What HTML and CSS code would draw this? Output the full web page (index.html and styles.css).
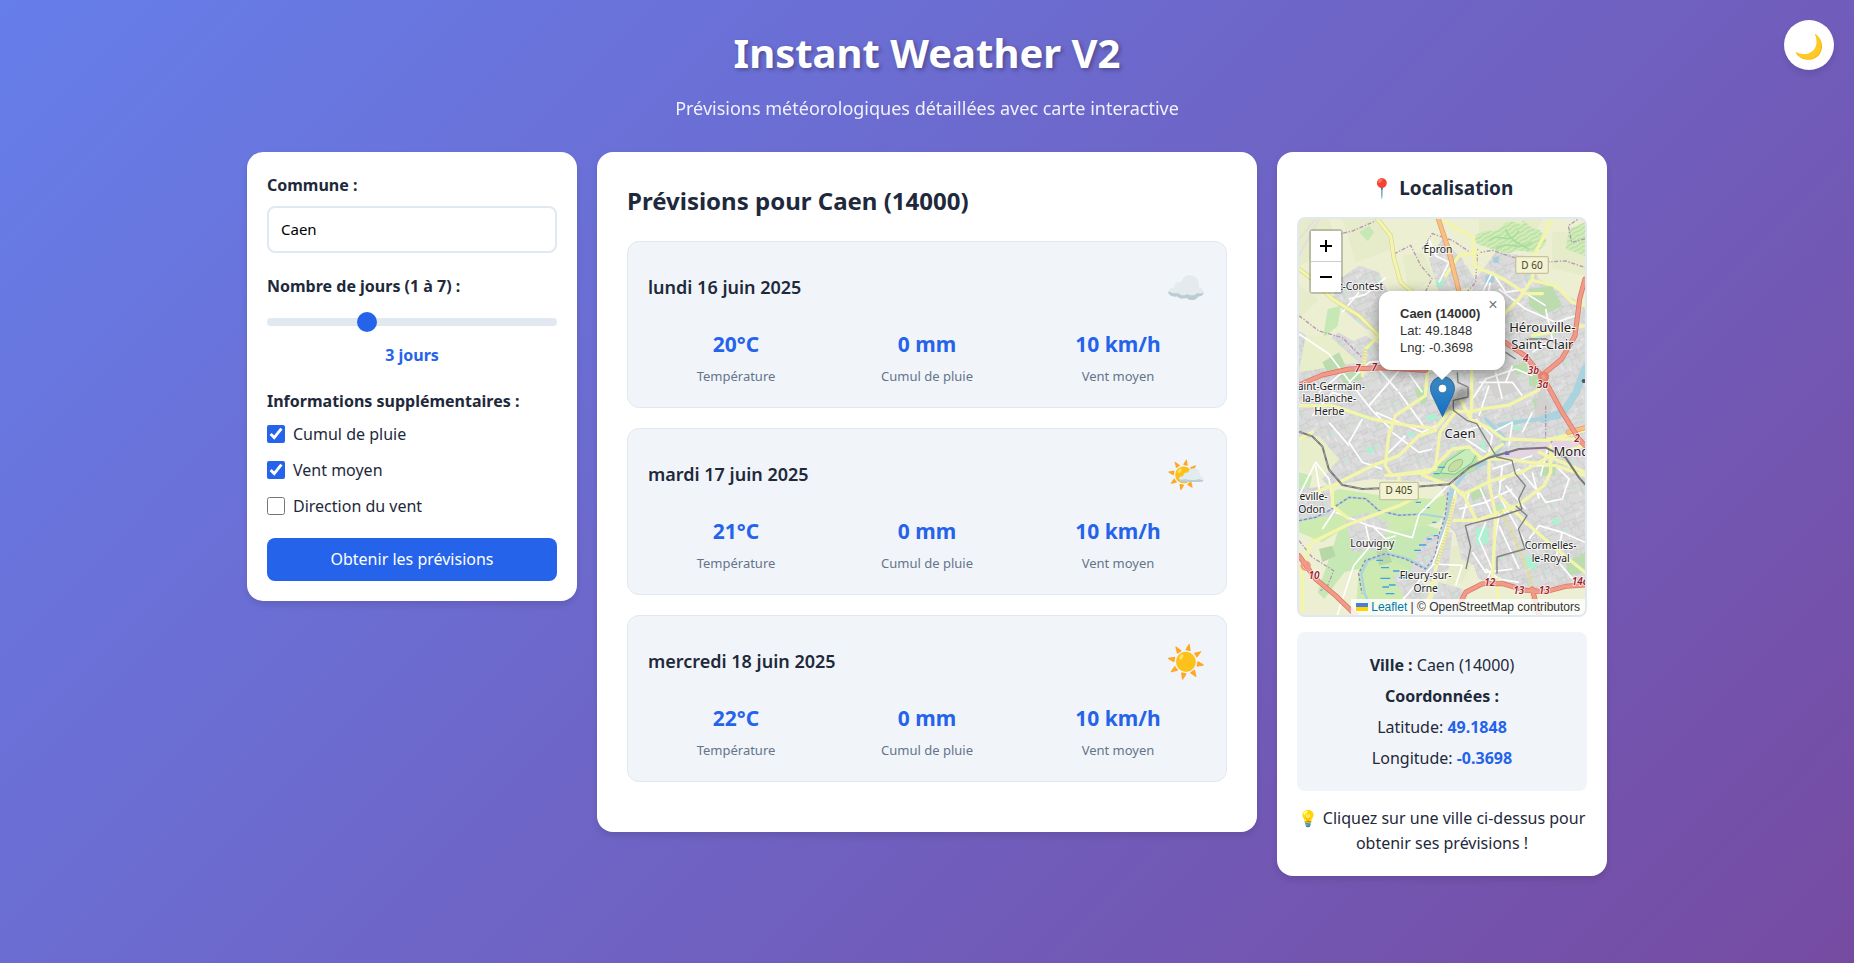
FILE: index.html
```html
<!DOCTYPE html>
<html lang="fr">
<head>
<meta charset="utf-8">
<meta name="viewport" content="width=device-width, initial-scale=1">
<title>Instant Weather V2</title>
<link rel="stylesheet" href="styles.css">
</head>
<body>
<button class="theme-toggle" type="button" aria-label="Changer de thème">🌙</button>
<div class="container">
  <header class="header">
    <h1>Instant Weather V2</h1>
    <p>Prévisions météorologiques détaillées avec carte interactive</p>
  </header>
  <main class="layout">
    <form class="card form-card">
      <div class="field">
        <label class="field-label" for="commune">Commune :</label>
        <input class="text-input" id="commune" type="text" value="Caen">
      </div>
      <div class="field">
        <label class="field-label" for="days">Nombre de jours (1 à 7) :</label>
        <input class="range" id="days" type="range" min="1" max="7" value="3">
        <output class="days-value" for="days">3 jours</output>
      </div>
      <fieldset class="options">
        <legend class="field-label">Informations supplémentaires :</legend>
        <label class="option"><input type="checkbox" checked>Cumul de pluie</label>
        <label class="option"><input type="checkbox" checked>Vent moyen</label>
        <label class="option"><input type="checkbox">Direction du vent</label>
      </fieldset>
      <button class="submit" type="submit">Obtenir les prévisions</button>
    </form>

    <section class="card forecast-card">
      <h2>Prévisions pour Caen (14000)</h2>
      <div class="days">
        <article class="day">
          <div class="day-head"><h3>lundi 16 juin 2025</h3><span class="day-icon">☁️</span></div>
          <div class="stats">
            <div class="stat"><strong>20°C</strong><span>Température</span></div>
            <div class="stat"><strong>0 mm</strong><span>Cumul de pluie</span></div>
            <div class="stat"><strong>10 km/h</strong><span>Vent moyen</span></div>
          </div>
        </article>
        <article class="day">
          <div class="day-head"><h3>mardi 17 juin 2025</h3><span class="day-icon">🌤️</span></div>
          <div class="stats">
            <div class="stat"><strong>21°C</strong><span>Température</span></div>
            <div class="stat"><strong>0 mm</strong><span>Cumul de pluie</span></div>
            <div class="stat"><strong>10 km/h</strong><span>Vent moyen</span></div>
          </div>
        </article>
        <article class="day">
          <div class="day-head"><h3>mercredi 18 juin 2025</h3><span class="day-icon">☀️</span></div>
          <div class="stats">
            <div class="stat"><strong>22°C</strong><span>Température</span></div>
            <div class="stat"><strong>0 mm</strong><span>Cumul de pluie</span></div>
            <div class="stat"><strong>10 km/h</strong><span>Vent moyen</span></div>
          </div>
        </article>
      </div>
    </section>

    <aside class="card map-card">
      <h3 class="map-title">📍 Localisation</h3>
      <div class="map">
        <svg class="map-tiles" viewBox="0 0 858 1188" preserveAspectRatio="xMidYMid slice" aria-hidden="true">
          <defs>
            <pattern id="urban" width="104" height="92" patternUnits="userSpaceOnUse" patternTransform="rotate(-24)">
              <rect width="104" height="92" fill="#dbdbdb"/>
              <path d="M0 14h40l6 18h58M0 50h30v42M62 0v32M30 50l74 6M78 56v36M14 14v36M46 32v20M54 54v38M86 0v32M0 74h30M54 76h24M30 64h24M62 16h24M78 70h26" fill="none" stroke="#cdcdce" stroke-width="3"/>
              <path d="M0 32h14M104 44H88v12M40 14V0M20 74v18" fill="none" stroke="#ececec" stroke-width="3"/>
              <path d="M64 18h10v8H64zM4 56h12v8H4zM82 74h8v10h-8z" fill="#c9dfc5"/>
              <path d="M34 70h8v9h-8z" fill="#b4eed2"/>
              <path d="M18 20h16v6H18zM66 60h8v12h-8zM90 8h10v6H90zM36 56h8v4h-8z" fill="#d0cccb"/>
            </pattern>
            <pattern id="wood" width="30" height="24" patternUnits="userSpaceOnUse" patternTransform="rotate(-30)">
              <rect width="30" height="24" fill="#d3edb8"/>
              <path d="M0 6c8-6 14 6 30 0M0 18c10-6 18 6 30 0" fill="none" stroke="#b5dda4" stroke-width="4"/>
            </pattern>
          </defs>
          <rect width="858" height="1188" fill="#edefd2"/>
          <g fill="#e6ecc9">
            <path d="M0 0h90l30 80-120 60zM130 0h120l30 90-110 40zM310 110l60-10 40 80-80 40zM0 200l60 40-60 60zM540 0h190l-30 60-160 20zM760 40h98v130l-100-20zM460 980l90 0-60 110-50 10z"/>
          </g>
          <g fill="#c6e8b5">
            <path d="M86 270l40-10-10 60-44 38zM180 40l30-20 16 20-20 26zM0 760l40 10-14 60-26 0zM120 930l50-60 80-10 70 40 100 30-14 110-70 30-120-30-80 20-60 80-20-20z"/>
            <path d="M0 870l120-60 130 20 160 10 60-30-50 100-170 40-120-20-60 40-70-30zM180 1040l80-30 70 40-20 100-100 38h-40z" fill="#cdebb0"/>
            <path d="M60 990l40-10 10 30-40 20zM230 980l30 0 20 50-40 10z" fill="#b7d7a8"/>
          </g>
          <g fill="url(#urban)">
            <path d="M100 240l20-60 60-40 60 20 50 110-40 70-50-10-70-60z"/>
            <path d="M390 120l40-60 60 60 50 80-120 20zM530 180l60-80 90 10 40 70 138 80v560l-50 50-20 100-60-20-180 100-60-30-30-120 20-170-140 10-170 20-130-10-50-40-80 30V300l100 40 60 40 50-40 200 120 90 10 60-60z"/>
            <path d="M0 430l200-80 180 110 80 0 260-270 138 90v520l-210-10-120 100-70-20-40-80-200-10-130 20-140-140-68-30z"/>
            <path d="M450 830l200-70 208 40v300l-150 20-170-40-40-120-70-50zM140 900l60-20 70 30-20 80-90 10zM380 950l80-10-10 110-50 40-70-30zM0 810l90-10 20 90-110 10zM420 1090l70 20 10 80H380zM280 1070l60-10 60 60-60 60z"/>
          </g>
          <path d="M20 350l70 0 90 80-180 30zM0 660l60-10 60 70-50 60-70-30z" fill="#e8edca"/>
          <g fill="#bcdcb0">
            <path d="M70 430l50-30 20 40-50 30zM120 470l60-20 10 30-50 20zM690 210l70-10 30 60-60 30-40-30zM350 300l30 20-10 20zM345 510l24-12 18 46-20 14zM640 440l40-10 10 30-40 10zM690 460l40 0 0 50-40-10zM720 740l50-10 0 40-40 0zM510 810l40-10 10 30-40 14zM700 540l40-10 10 40-40 10zM800 1030l58-30v60l-50 10z"/>
          </g>
          <g fill="#aef0d2">
            <path d="M410 186l22-6 2 22-22 2zM530 930l34-10 6 52-38 10zM680 1010l40 10-10 30-32-4zM330 800l20 0 0 18-20 0zM380 590l30-6 4 16-30 6zM640 620l30 0-4 12-28 0zM760 900l22-4 0 20-20 0zM700 345l18-6 6 16-20 4zM545 665l14 0 0 30-14 0zM590 860l16-8 10 24-20 8zM200 690l14-8 14 14-16 10zM330 640l18 0 0 12-18 0z"/>
          </g>
          <g fill="#a5cde0">
            <path d="M560 170l28-6-4 28-26 0zM582 118l18-6-2 20-14 0z"/>
          </g>
          <path d="M530 50c40-30 50 0 80-30s60 10 60-10 20 20 40 20 20 20 30 30-20 40-40 40-40-10-60 0-60-10-90-20-20-20-20-30zM810 30l48-20v100l-58-20z" fill="url(#wood)"/>
          <path d="M570 65c30-30 60 20 90-30M590 90c40-30 60 10 110-20M620 30c10 30 30 40 70 60" fill="none" stroke="#a9dd9b" stroke-width="5"/>
          <path d="M640 690l110-20 90-10 18 20v40l-120-20-140 20z" fill="#e6d3e4"/>
          <path d="M720 500l40 60-14 60-40-20zM560 480l80-30 30 60-80 30z" fill="#d3d1cf"/>

          <!-- water -->
          <g fill="none" stroke="#a9d3df" stroke-linecap="round" stroke-linejoin="round">
            <path d="M858 440l-24 60-20 60-34 34-120 14-60 10" stroke-width="12"/>
            <path d="M858 450l-26 70-40 60-60 20" stroke-width="22"/>
            <path d="M560 600l60 60-40 60-80 40-30 40-20 60" stroke-width="11"/>
            <path d="M455 810l-8 70-20 70-10 60-30 40-60-30-60-16-60 20-20 40 10 60 30 60" stroke-width="7"/>
            <path d="M0 905l50-10 40-20 60-40 50 4 40 36 60 14 70-4 60 10" stroke-width="6"/>
          </g>
          <path d="M447 820l-8 70-20 60-10 60-30 40-60-30-60-16-60 20-20 40 10 60M0 905l50-10 40-20 60-40 50 4 40 36 60 14 70-4" fill="none" stroke="#8e87b2" stroke-width="4" stroke-dasharray="9 6"/>
          <path d="M395 780l20-40 80-56 50 20-20 50-60 24z" fill="#b9e3a2"/>
          <path d="M424 762l20-34 60-40 30 14-16 30-50 34z" fill="#c8ecba" stroke="#7bbda4" stroke-width="3"/>
          <path d="M448 752c0-20 30-34 40-30s-6 30-20 34-20 2-20-4z" fill="#c5dea1" stroke="#a3bd85" stroke-width="3"/>
          <path d="M232 1024h20M246 1046h24M244 1078h30M282 1056h20M250 1104h20M300 1076h24M260 1124h26M350 850h16M376 866h16M404 950h14M360 978h22M384 960h14M346 994h20M400 910h12M270 1098h20M418 745h20M404 764h18" stroke="#40a0ea" stroke-width="4"/>

          <!-- boundaries -->
          <g fill="none" stroke="#b696b6" stroke-width="4" stroke-dasharray="12 5 4 5">
            <path d="M60 70l40-20 60-14 70-30M285 105l50-26 30 60 34 40-30 60M370 90l30-46 60 20 60 40 60-10 60 20 70 16 90-4 60 20M536 90l-6 100-44 50M0 290l60 46 70 20 60 60M760 660l-20 80M740 560l0 110M0 965l40 50 64 40-20 50-20 10M858 60l-40 10-10-50 30-20"/>
          </g>

          <!-- minor streets -->
          <g fill="none" stroke="#fff" stroke-width="5" stroke-linejoin="round">
            <path d="M0 345l90 60 60 80 70 90 60 60M150 490l60-60 90-10M60 520l70-60M40 590l60-70 70 20M210 560l60-70 60-70M230 440l70 80 80 110M300 420l70 100M190 600l-40 70 40 60 60 20M90 610l60 70M230 580l140 60 40-20M280 640l80 60 40-10M320 650l-60 60"/>
            <path d="M150 240l50-14 60-50M130 280l50-60M390 60l20 50 40 20-30 60M550 220l30-60 40 60 60-10M560 260l14-70M600 210l80 60 90 40 60-20M740 270l20 90-60 40M660 210l80 50M570 500l-30 90M520 540l40-60 90-30 50 20M590 460l20 80M540 490l100 0 30 40M640 440l-20 50"/>
            <path d="M530 600l50 50-10 50M550 620l-70 20M500 660l60 40M580 750l120-40M600 790l60-40 50 60M480 870l80-20 80-40M510 820l-20 80M540 800l40 90M620 800l60 70M610 740l-10 90 40 70M690 740l80 0 40 40-20 60-50 10-20-30M650 860l-50 30-10 60M560 910l-20 50 40 90-20 40M700 760l20 80M640 900l50 90M520 1000l40 60 80-10M600 920l60 130"/>
            <path d="M690 960l30-40 70 20 68 30M790 940l-20 80 60 70M0 830l50-100 40 50 10 60M50 740l14 90M110 870l-40 60M110 880l100 40 130 36 20-70 90-90M200 920l14 60-50 60-50 150M220 920l40 40 30-10M470 810l-20 90-50 140-130 150M400 1035l90 4-20 60M560 1050l40 30 60 10M670 640l30-60M580 640l60-30-10 70M745 690l-20 80"/>
            <path d="M60 0l-60 110M0 60l50-60M330 460l-40 70M180 650l60 10M760 380l70-20" stroke="#e6dbe3"/>
          </g>

          <!-- secondary roads -->
          <g fill="none" stroke-linejoin="round" stroke-linecap="round">
            <path d="M235 0l40 50 10 70 20 70 60 50 40 60M0 150l40 30 60 60 80 50 60 60 20 50" stroke="#d0d08c" stroke-width="13"/>
            <g stroke="#f3f5ab" stroke-width="10">
              <path d="M235 0l40 50 10 70 20 70 60 50 40 60M0 150l40 30 60 60 80 50 60 60 20 50"/>
              <path d="M430 0l50 34 40 20 10 90 50 20 40 20 60 40 50 0M540 98l-60 12-40 60M760 0l-50 100-10 80-40 60-60 60M700 184l70 16 50 50 38 10"/>
              <path d="M240 350l-40 40-10 80M385 460l-6 70-90 60-20 60-10 90 20 30 130-20 14-110 50-66M0 560l100 0 120 40 110 20 80 8 40-50 60 0 50-10 70-10 90-46M518 450v110l-4 40 60 30 40 30 130 4 112-30M514 600l-30-60"/>
              <path d="M0 660l40-20M0 840l100-40 120-60 80-30 60-60 50-16M260 770l130-10 70-70 50-6 40 36 60-44M540 720l80 0 150 20 88 30M370 768l50 20 40 10 30 30 80-40 100-30 90-50 100-30M570 720l0 70 20 100-10 200M755 680v80l-20 40-80 60-120 44-70 0M470 830l-20 80-40 140-30 138M600 830l80 80 80 70 98 80M490 820l40 80M720 700l138 60M100 800l0 60 50 40M0 1050l40-80 100-50 160-60 60-30M10 1050l0 130M300 770v30M597 1080l-2 110M745 660l80 0M700 350l158-30"/>
            </g>
            <g stroke="#e0dc99" stroke-width="11" stroke-dasharray="5 4" stroke-linecap="butt">
              <path d="M595 860l40 70 60 150 10 100M462 840l-20 110-32 90M200 390l-14 70"/>
            </g>
          </g>

          <!-- primary roads -->
          <g fill="none" stroke-linejoin="round" stroke-linecap="round">
            <path d="M418 0l30 90 30 120 30 100M858 626l-50 14" stroke="#dd9c62" stroke-width="15"/>
            <path d="M418 0l30 90 30 120 30 100M858 626l-50 14" stroke="#fbbf85" stroke-width="11"/>
            <path d="M0 498l70-30 80-18 100-4 130 8M858 180l-16 60-14 110-40 70-60 50-50-60-60-40M730 470l60 110 50 80 18 20M0 1010l50 70 60 50 60 58M480 1160l20-40 50-26 60 0 70 20 60 4 60-16 58-4M700 1110l20 78" stroke="#dc6f62" stroke-width="15"/>
            <path d="M0 498l70-30 80-18 100-4 130 8M858 180l-16 60-14 110-40 70-60 50-50-60-60-40M730 470l60 110 50 80 18 20M0 1010l50 70 60 50 60 58M480 1160l20-40 50-26 60 0 70 20 60 4 60-16 58-4M700 1110l20 78" stroke="#f19a88" stroke-width="11"/>
            <circle cx="734" cy="474" r="12" stroke="#e8806f" stroke-width="9"/>
            <circle cx="20" cy="1040" r="12" stroke="#f19a88" stroke-width="7"/>
          </g>

          <!-- railways -->
          <g fill="none" stroke-linejoin="round">
            <path d="M0 638l40 14 30 30 20 70 40 46 60 12 150-6 110-8 60-50 60-30 90-26 80-4 60 30 40 60 58 64" stroke="#777" stroke-width="6"/>
            <path d="M0 638l40 14 30 30 20 70 40 46 60 12 150-6 110-8 60-50" stroke="#bbb" stroke-width="2" stroke-dasharray="14 12"/>
            <path d="M475 460l2 30 30 14 0 30-44 10 0 30 40 30 30 10 60 100 46 10 10 40 30 36-20 40 10 30-70 24-80 20-20 6 16 64-14 66M650 860l34 30-26 40 20 60-84 24v50M620 400l30 20M680 360h60l50 20" stroke="#808080" stroke-width="4"/>
          </g>
          <rect x="618" y="697" width="13" height="11" fill="#6d73b5"/>
          <circle cx="854" cy="486" r="6" fill="#555"/>

          <g fill="#f4f2d4" stroke="#c6c49a" stroke-width="4">
            <rect x="650" y="113" width="98" height="50" rx="5"/>
            <rect x="242" y="790" width="116" height="52" rx="5"/>
          </g>
          <g class="road-ref">
            <text x="699" y="149">D 60</text>
            <text x="300" y="826">D 405</text>
          </g>
          <g class="place">
            <text x="417" y="101">Épron</text>
            <text x="186" y="213">t-Contest</text>
            <text x="97" y="512">aint-Germain-</text>
            <text x="91" y="550">la-Blanche-</text>
            <text x="91" y="589">Herbe</text>
            <text x="38" y="844">teville-</text>
            <text x="38" y="882">Odon</text>
            <text x="220" y="984">Louvigny</text>
            <text x="380" y="1080">Fleury-sur-</text>
            <text x="380" y="1118">Orne</text>
            <text x="755" y="989">Cormelles-</text>
            <text x="755" y="1028">le-Royal</text>
          </g>
          <g class="place town">
            <text x="730" y="338">Hérouville-</text>
            <text x="730" y="389">Saint-Clair</text>
            <text x="483" y="656">Caen</text>
            <text x="828" y="712">Monde</text>
          </g>
          <g class="exit">
            <text x="176" y="459">7</text><text x="226" y="456">7</text><text x="680" y="430">4</text>
            <text x="703" y="465">3b</text><text x="731" y="506">3a</text><text x="834" y="669">2</text>
            <text x="45" y="1080">10</text><text x="572" y="1102">12</text><text x="659" y="1124">13</text>
            <text x="736" y="1124">13</text><text x="842" y="1097">14c</text>
          </g>
        </svg>

        <div class="zoom-control">
          <button type="button" aria-label="Zoom avant"><svg viewBox="0 0 14 14"><path d="M7 1v12M1 7h12"/></svg></button>
          <button type="button" aria-label="Zoom arrière"><svg viewBox="0 0 14 14"><path d="M1 7h12"/></svg></button>
        </div>

        <svg class="marker-shadow" viewBox="0 0 41 41" aria-hidden="true"><path d="M12 40C14 28 24 14 34 12c8 0 6 10-2 16-6 5-14 8-20 12z"/></svg>
        <svg class="marker" viewBox="0 0 25 41" aria-hidden="true">
          <defs><linearGradient id="pin" x1="0" y1="0" x2="0" y2="1"><stop offset="0" stop-color="#3f8cc4"/><stop offset="1" stop-color="#126fc6"/></linearGradient></defs>
          <path d="M12.500 .5C5.900 .5.500 5.900.500 12.600c0 2.500.9 5 2.100 7.400L12.500 40.500 22.400 20c1.200-2.400 2.100-4.900 2.100-7.400C24.500 5.900 19.100.500 12.500.500z" fill="url(#pin)" stroke="#2e6c97"/>
          <circle cx="12.500" cy="12.500" r="4.300" fill="#fff" stroke="#2e6c97" stroke-width=".8"/>
        </svg>

        <div class="popup">
          <strong>Caen (14000)</strong>
          <span>Lat: 49.1848</span>
          <span>Lng: -0.3698</span>
          <button class="popup-close" type="button" aria-label="Fermer">×</button>
        </div>

        <div class="attribution">
          <svg class="flag" viewBox="0 0 12 8" aria-hidden="true"><path fill="#4C7BE1" d="M0 0h12v4H0z"/><path fill="#FFD500" d="M0 4h12v4H0z"/></svg>
          <a href="#">Leaflet</a> | © OpenStreetMap contributors
        </div>
      </div>

      <div class="city-info">
        <p><strong>Ville :</strong> Caen (14000)</p>
        <p><strong>Coordonnées :</strong></p>
        <p>Latitude: <span class="coord">49.1848</span></p>
        <p>Longitude: <span class="coord">-0.3698</span></p>
      </div>
      <p class="hint">💡 Cliquez sur une ville ci-dessus pour obtenir ses prévisions !</p>
    </aside>
  </main>
</div>
</body>
</html>
```
FILE: styles.css
```css
* {
  box-sizing: border-box;
  margin: 0;
  padding: 0;
}

body {
  min-height: 100vh;
  background: linear-gradient(135deg, #667eea 0%, #764ba2 100%);
  color: #1e293b;
  font-family: "Noto Sans", "Noto Color Emoji", sans-serif;
  font-size: 16px;
  line-height: 26px;
}

button,
input {
  font-family: inherit;
}

.theme-toggle {
  position: fixed;
  top: 20px;
  right: 20px;
  width: 50px;
  height: 50px;
  border: 0;
  border-radius: 50%;
  background: #fff;
  box-shadow: 0 4px 6px rgba(0, 0, 0, 0.1);
  font-size: 24px;
  cursor: pointer;
}

.container {
  max-width: 1400px;
  margin: 0 auto;
  padding: 20px;
}

.header {
  margin-bottom: 30px;
  color: #fff;
  text-align: center;
}

.header h1 {
  margin-bottom: 8px;
  font-size: 40px;
  line-height: 66px;
  text-shadow: 2px 2px 4px rgba(0, 0, 0, 0.3);
}

.header p {
  font-size: 18px;
  line-height: 28px;
  opacity: 0.9;
}

.layout {
  display: grid;
  grid-template-columns: 1fr 2fr 1fr;
  align-items: start;
  gap: 20px;
}

.card {
  padding: 20px;
  border-radius: 16px;
  background: #fff;
  box-shadow: 0 4px 6px rgba(0, 0, 0, 0.1);
}

.field {
  margin-bottom: 20px;
}

.field-label {
  display: block;
  margin-bottom: 8px;
  font-weight: 700;
}

.text-input {
  display: block;
  width: 100%;
  padding: 10px 12px;
  border: 2px solid #e2e8f0;
  border-radius: 8px;
  background: #fff;
  color: #000;
  font-size: 15px;
  line-height: 23px;
}

.range {
  display: block;
  width: 100%;
  height: 8px;
  margin: 19px 0 16px;
  border-radius: 4px;
  background: #e2e8f0;
  appearance: none;
}

.range::-webkit-slider-thumb {
  width: 20px;
  height: 20px;
  border-radius: 50%;
  background: #2563eb;
  appearance: none;
}

.days-value {
  display: block;
  color: #2563eb;
  font-weight: 700;
  text-align: center;
}

.options {
  display: flex;
  flex-direction: column;
  gap: 12px;
  margin-bottom: 20px;
  border: 0;
}

.option {
  display: flex;
  align-items: center;
  gap: 8px;
  line-height: 24px;
}

.option input {
  width: 18px;
  height: 18px;
  accent-color: #2563eb;
}

.submit {
  width: 100%;
  padding: 10px 24px;
  border: 0;
  border-radius: 8px;
  background: #2563eb;
  color: #fff;
  font-size: 16px;
  font-weight: 400;
  line-height: 23px;
  cursor: pointer;
}

.forecast-card {
  padding: 30px 30px 50px;
}

.forecast-card h2 {
  margin-bottom: 22px;
  font-size: 24px;
  line-height: 37px;
}

.days {
  display: flex;
  flex-direction: column;
  gap: 20px;
}

.day {
  padding: 20px;
  border: 1px solid #e2e8f0;
  border-radius: 12px;
  background: #f1f5f9;
}

.day-head {
  display: flex;
  align-items: center;
  justify-content: space-between;
  margin-bottom: 15px;
}

.day-head h3 {
  font-size: 18px;
  font-weight: 600;
}

.day-icon {
  font-size: 32px;
  line-height: 50px;
}

.stats {
  display: grid;
  grid-template-columns: repeat(3, 1fr);
  gap: 15px;
}

.stat {
  display: flex;
  flex-direction: column;
  gap: 3px;
  text-align: center;
}

.stat strong {
  color: #2563eb;
  font-size: 21px;
  line-height: 35px;
}

.stat span {
  color: #64748b;
  font-size: 13px;
  line-height: 22px;
}

.map-title {
  margin-bottom: 13px;
  font-size: 19px;
  font-weight: 700;
  line-height: 32px;
  text-align: center;
}

.map {
  position: relative;
  height: 400px;
  overflow: hidden;
  margin-bottom: 15px;
  border: 2px solid #e2e8f0;
  border-radius: 8px;
  background: #dddddd;
  font-family: "Liberation Sans", sans-serif;
}

.map-tiles {
  display: block;
  width: 100%;
  height: 100%;
}

.place {
  fill: #222;
  stroke: rgba(255, 255, 255, 0.75);
  stroke-width: 6px;
  paint-order: stroke;
  font-family: "Noto Sans", sans-serif;
  font-size: 31px;
  text-anchor: middle;
}

.town {
  font-size: 39px;
}

.road-ref {
  fill: #444421;
  font-family: "Noto Sans", sans-serif;
  font-size: 30px;
  text-anchor: middle;
}

.exit {
  fill: #9b1c2c;
  stroke: rgba(255, 255, 255, 0.8);
  stroke-width: 5px;
  paint-order: stroke;
  font-family: "Noto Sans", sans-serif;
  font-size: 30px;
  font-style: italic;
  font-weight: 600;
  text-anchor: middle;
}

.zoom-control {
  position: absolute;
  top: 10px;
  left: 10px;
  border: 2px solid rgba(0, 0, 0, 0.2);
  border-radius: 4px;
  background-clip: padding-box;
}

.zoom-control button {
  display: flex;
  align-items: center;
  justify-content: center;
  width: 30px;
  height: 30px;
  border: 0;
  background: #fff;
}

.zoom-control button:first-child {
  height: 31px;
  border-bottom: 1px solid #ccc;
}

.zoom-control svg {
  width: 14px;
  height: 14px;
  fill: none;
  stroke: #000;
  stroke-width: 2;
}

.marker {
  position: absolute;
  bottom: 50%;
  left: 50%;
  width: 25px;
  height: 41px;
  margin-left: -12px;
}

.marker-shadow {
  position: absolute;
  bottom: 50%;
  left: 50%;
  width: 41px;
  height: 41px;
  margin-left: -12px;
  fill: rgba(0, 0, 0, 0.3);
  filter: blur(2px);
}

.popup {
  position: absolute;
  bottom: calc(50% + 47px);
  left: 50%;
  display: flex;
  flex-direction: column;
  width: 126px;
  padding: 14px 21px;
  border-radius: 12px;
  background: #fff;
  box-shadow: 0 3px 14px rgba(0, 0, 0, 0.4);
  color: #333;
  font-size: 13px;
  line-height: 17px;
  white-space: nowrap;
  transform: translateX(-50%);
}

.popup::after {
  content: "";
  position: absolute;
  top: 100%;
  left: 50%;
  border: 10px solid transparent;
  border-top-color: #fff;
  border-bottom: 0;
  transform: translateX(-50%);
}

.popup-close {
  position: absolute;
  top: 2px;
  right: 0;
  width: 24px;
  height: 24px;
  border: 0;
  background: none;
  color: #757575;
  font-size: 16px;
  line-height: 24px;
}

.attribution {
  position: absolute;
  right: 0;
  bottom: 0;
  padding: 0 5px;
  background: rgba(255, 255, 255, 0.8);
  color: #333;
  font-size: 12px;
  line-height: 16px;
  white-space: nowrap;
}

.attribution a {
  color: #0078a8;
  text-decoration: none;
}

.flag {
  width: 12px;
  height: 8px;
}

.city-info {
  display: flex;
  flex-direction: column;
  gap: 5px;
  margin-bottom: 15px;
  padding: 20px 15px;
  border-radius: 8px;
  background: #f1f5f9;
  text-align: center;
}

.coord {
  color: #2563eb;
  font-weight: 700;
}

.hint {
  line-height: 25px;
  text-align: center;
}
```
